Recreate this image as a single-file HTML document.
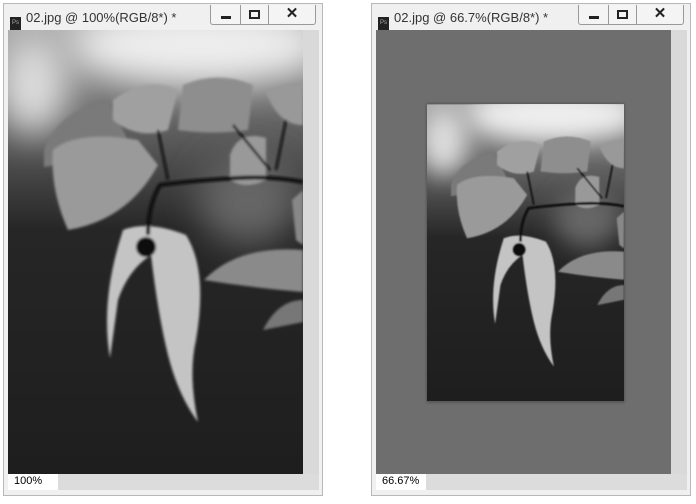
<!DOCTYPE html>
<html><head><style>
*{margin:0;padding:0;box-sizing:border-box}
body{width:696px;height:504px;background:#fff;position:relative;overflow:hidden;font-family:"Liberation Sans",sans-serif}
.win{position:absolute;top:3px;width:320px;height:493px;background:#f0f0f0;border:1px solid #b8b8b8}
.ttl{position:absolute;left:6px;top:6px;font-size:13px;color:#333}
.ps{display:inline-block;width:11px;height:13px;background:#222;vertical-align:-2px;margin-right:5px;color:#aaa;font-size:6px;text-align:center;line-height:13px}
.btns{position:absolute;right:6px;top:1px;width:106px;height:20px;border:1px solid #999;border-top:none;background:#f4f4f4;display:flex;border-radius:0 0 3px 3px}
.btns div{border-right:1px solid #999;position:relative}
.btns div:last-child{border:none}
.view{position:absolute;left:4px;top:26px;width:295px;height:444px;overflow:hidden}
.sb{position:absolute;left:299px;top:26px;width:16px;height:444px;background:#d9d9d9}
.st{position:absolute;left:4px;top:470px;width:311px;height:16px;background:#dcdcdc;font-size:11px}
.st span{display:inline-block;background:#fff;padding:1px 6px;height:16px;width:50px}
</style></head><body>
<svg width="0" height="0" style="position:absolute"><defs>
<filter id="b" x="-50%" y="-50%" width="200%" height="200%"><feGaussianBlur stdDeviation="18"/></filter>
<filter id="b2"><feGaussianBlur stdDeviation="1.2"/></filter>
<linearGradient id="bg" x1="0" y1="0" x2="0" y2="1"><stop offset="0" stop-color="#a5a5a5"/><stop offset=".22" stop-color="#606060"/><stop offset=".45" stop-color="#262626"/><stop offset="1" stop-color="#1e1e1e"/></linearGradient>
<g id="photo">
<rect width="295" height="444" fill="url(#bg)"/>
<ellipse cx="190" cy="15" rx="130" ry="40" fill="#eee" filter="url(#b)"/>
<ellipse cx="25" cy="55" rx="35" ry="50" fill="#ddd" filter="url(#b)"/>
<ellipse cx="240" cy="170" rx="50" ry="45" fill="#666" filter="url(#b)"/>
<g filter="url(#b2)">
<path d="M36 120 Q50 80 100 72 L120 110 Q80 130 36 137Z" fill="#7a7a7a"/>
<path d="M45 120 Q70 100 130 110 L150 135 Q120 190 60 200 Q42 160 45 120Z" fill="#9a9a9a"/>
<path d="M105 70 Q140 45 170 60 L160 100 Q130 110 105 90Z" fill="#a0a0a0"/>
<path d="M175 55 Q210 40 245 55 L240 100 Q205 105 170 100Z" fill="#8e8e8e"/>
<path d="M258 62 Q280 50 295 55 L295 95 Q270 95 258 62Z" fill="#999"/>
<path d="M222 125 Q230 100 258 108 L258 150 Q238 160 222 150Z" fill="#999"/>
<path d="M196 250 Q230 215 295 220 L295 262 Q245 258 196 250Z" fill="#8a8a8a"/>
<path d="M255 300 Q270 270 295 270 L295 292 Z" fill="#777"/>
<path d="M284 170 L295 160 L295 215 L288 210Z" fill="#888"/>
<path d="M115 200 Q140 190 178 205 Q200 240 188 310 Q180 345 190 392 Q170 365 160 325 Q150 285 143 225 Q120 240 110 270 L102 328 Q92 270 115 200Z" fill="#c4c4c4"/>
<circle cx="138" cy="217" r="10" fill="#0a0a0a"/>
<path d="M140 205 Q140 175 152 155 Q190 150 230 148 Q265 146 295 152" stroke="#111" stroke-width="4" fill="none"/>
<path d="M150 100 L160 150 M225 95 L262 140 M278 90 L268 140" stroke="#111" stroke-width="2.5" fill="none"/>
</g>
</g></defs></svg>

<div class="win" style="left:3px">
<div class="ttl"><span class="ps">Ps</span>02.jpg @ 100%(RGB/8*) *</div>
<div class="btns"><div style="width:30px"><i style="position:absolute;left:10px;top:11px;width:10px;height:3px;background:#222"></i></div><div style="width:28px"><i style="position:absolute;left:8px;top:5px;width:11px;height:9px;border:2px solid #222"></i></div><div style="flex:1;text-align:center;font-size:15px;font-weight:bold;line-height:18px;color:#222">✕</div></div>
<div class="view"><svg width="295" height="444"><use href="#photo"/></svg></div>
<div class="sb"></div>
<div class="st"><span>100%</span></div>
</div>

<div class="win" style="left:371px">
<div class="ttl"><span class="ps">Ps</span>02.jpg @ 66.7%(RGB/8*) *</div>
<div class="btns"><div style="width:30px"><i style="position:absolute;left:10px;top:11px;width:10px;height:3px;background:#222"></i></div><div style="width:28px"><i style="position:absolute;left:8px;top:5px;width:11px;height:9px;border:2px solid #222"></i></div><div style="flex:1;text-align:center;font-size:15px;font-weight:bold;line-height:18px;color:#222">✕</div></div>
<div class="view" style="background:#6e6e6e"><svg width="197" height="298" viewBox="0 0 295 444" style="position:absolute;left:51px;top:74px;box-shadow:0 0 3px #444"><use href="#photo"/></svg></div>
<div class="sb"></div>
<div class="st"><span>66.67%</span></div>
</div>
</body></html>
